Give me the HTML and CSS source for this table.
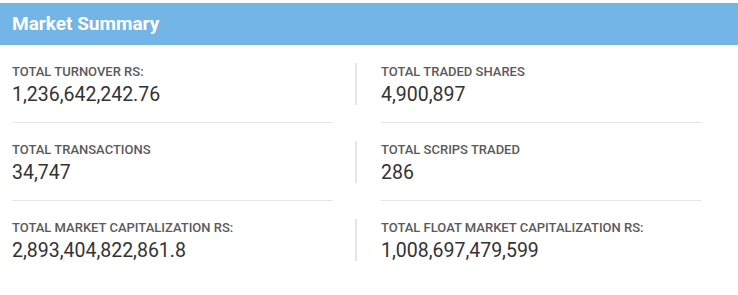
FILE: index.html
```html
<!DOCTYPE html>
<html>
<head>
<meta charset="utf-8">
<link rel="stylesheet" href="styles.css">
</head>
<body>
<div class="panel">
  <div class="panel-heading">Market Summary</div>
  <div class="panel-body">
    <div class="stat">
      <div class="stat-block">
        <div class="label">TOTAL TURNOVER RS:</div>
        <div class="value">1,236,642,242.76</div>
      </div>
      <div class="sep"></div>
    </div>
    <div class="stat right">
      <div class="stat-block">
        <div class="label">TOTAL TRADED SHARES</div>
        <div class="value">4,900,897</div>
      </div>
      <div class="sep"></div>
    </div>
    <div class="stat">
      <div class="stat-block">
        <div class="label">TOTAL TRANSACTIONS</div>
        <div class="value">34,747</div>
      </div>
      <div class="sep"></div>
    </div>
    <div class="stat right">
      <div class="stat-block">
        <div class="label">TOTAL SCRIPS TRADED</div>
        <div class="value">286</div>
      </div>
      <div class="sep"></div>
    </div>
    <div class="stat">
      <div class="stat-block">
        <div class="label">TOTAL MARKET CAPITALIZATION RS:</div>
        <div class="value">2,893,404,822,861.8</div>
      </div>
    </div>
    <div class="stat right">
      <div class="stat-block">
        <div class="label">TOTAL FLOAT MARKET CAPITALIZATION RS:</div>
        <div class="value">1,008,697,479,599</div>
      </div>
    </div>
  </div>
</div>
</body>
</html>
```

FILE: styles.css
```css
html, body {
  margin: 0;
  padding: 0;
  background: #fff;
}
body {
  font-family: Roboto, "Liberation Sans", sans-serif;
  padding-top: 3px;
}
.panel-heading {
  background: #74b5e7;
  color: #fff;
  font-weight: 700;
  font-size: 19px;
  height: 42px;
  line-height: 42px;
  padding: 0 12px;
}
.panel-body {
  display: grid;
  grid-template-columns: 343px 1fr;
  padding: 18px 12px 0;
}
.stat-block {
  height: 42px;
}
.stat.right .stat-block {
  border-left: 2px solid #e6e6e6;
  padding-left: 24px;
}
.label {
  font-size: 13px;
  font-weight: 500;
  color: #5a5a5a;
  line-height: 18px;
}
.value {
  font-size: 19.5px;
  color: #333;
  line-height: 24px;
  margin-top: 2px;
}
.sep {
  width: 321px;
  height: 1px;
  background: #e6e6e6;
  margin: 17px 0 18px;
}
.stat.right .sep {
  margin-left: 26px;
}
```
